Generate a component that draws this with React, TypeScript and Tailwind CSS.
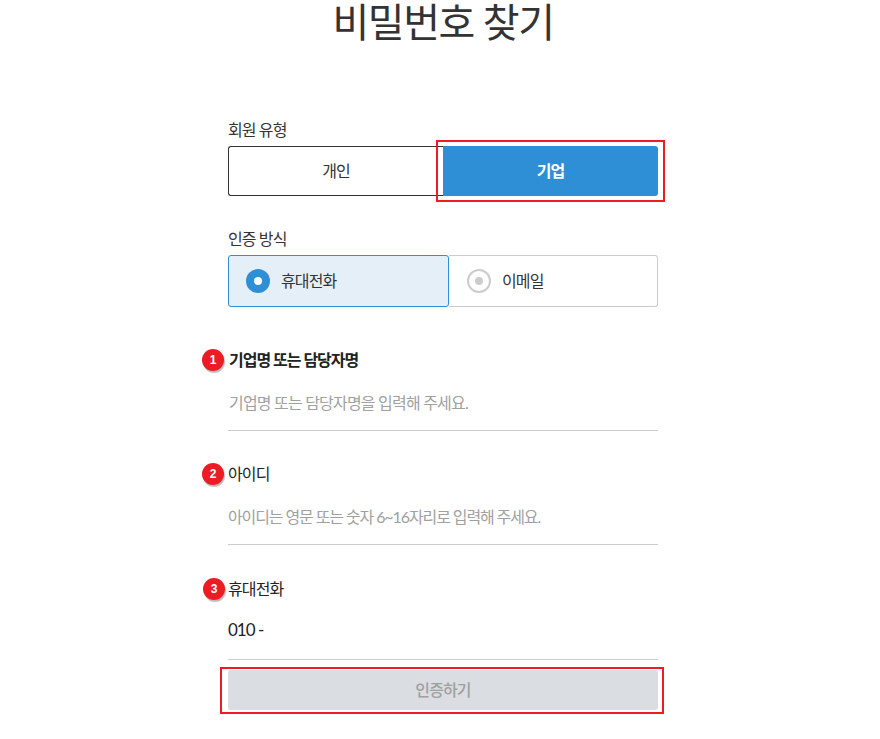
const fontStack = "font-['Lato','Noto_Sans_CJK_KR',sans-serif]";

function Marker({ n, className }: { n: number; className: string }) {
  return (
    <span
      className={`absolute flex h-[22px] w-[22px] items-center justify-center rounded-full bg-[#ed1c24] font-['Liberation_Sans',sans-serif] text-[12px] font-bold text-white shadow-[1px_2px_1px_#bbbbbb] ${className}`}
    >
      {n}
    </span>
  );
}

function Field({
  label,
  value,
  n,
  bold,
  className,
  labelClass,
  valueClass,
  markerClass,
}: {
  label: string;
  value: string;
  n: number;
  bold?: boolean;
  className: string;
  labelClass?: string;
  valueClass: string;
  markerClass: string;
}) {
  return (
    <div className={`relative ${className}`}>
      <Marker n={n} className={markerClass} />
      <div className={`h-[22px] text-[16px] leading-[22px] tracking-[-0.9px] text-[#222222] ${bold ? "font-bold" : ""} ${labelClass ?? ""}`}>
        {label}
      </div>
      <div className={`h-[60px] border-b border-[#cccccc] ${valueClass}`}>{value}</div>
    </div>
  );
}

export default function App() {
  return (
    <div className={`h-[739px] w-[880px] overflow-hidden bg-white ${fontStack}`}>
      <h1 className="pl-[6px] text-center text-[40px] leading-[44px] font-normal tracking-[-1.4px] text-[#333333]">비밀번호 찾기</h1>

      <div className="ml-[228px] mt-[75px] w-[430px]">
        <div className="h-[22px] text-[16px] leading-[22px] tracking-[-0.9px] text-[#333333]">회원 유형</div>

        <div className="relative mt-[5px] flex h-[50px]">
          <button className="h-full w-[215px] rounded-l-[3px] border border-r-0 border-[#333333] bg-white text-[16px] tracking-[-0.9px] text-[#333333]">
            개인
          </button>
          <button className="h-full w-[215px] rounded-r-[3px] bg-[#2f8fd6] text-[16px] font-bold tracking-[-0.9px] text-white">
            기업
          </button>
          <div className="absolute left-[208px] top-[-6px] h-[62px] w-[229px] border-2 border-[#ed1c24]" />
        </div>

        <div className="mt-[32px] h-[22px] text-[16px] leading-[22px] tracking-[-0.9px] text-[#333333]">인증 방식</div>

        <div className="mt-[5px] flex h-[52px]">
          <div className="flex h-full w-[221px] items-center rounded-[3px] border border-[#2f8fd6] bg-[#e5eff8] pl-[17px]">
            <span className="flex h-6 w-6 items-center justify-center rounded-full bg-[#2f8fd6]">
              <span className="h-2 w-2 rounded-full bg-white" />
            </span>
            <span className="ml-[11px] text-[16px] tracking-[-0.9px] text-[#333333]">휴대전화</span>
          </div>
          <div className="flex h-full w-[209px] items-center rounded-r-[3px] border border-l-0 border-[#cccccc] bg-white pl-[18px]">
            <span className="flex h-6 w-6 items-center justify-center rounded-full border-2 border-[#cccccc]">
              <span className="h-2 w-2 rounded-full bg-[#cccccc]" />
            </span>
            <span className="ml-[11px] text-[16px] tracking-[-0.9px] text-[#333333]">이메일</span>
          </div>
        </div>

        <Field
          className="mt-[42px]"
          n={1}
          bold
          label="기업명 또는 담당자명"
          value="기업명 또는 담당자명을 입력해 주세요."
          labelClass="pl-[1px] tracking-[-1px]"
          valueClass="pl-[1px] pt-[21px] text-[16px] leading-[22px] tracking-[-0.8px] text-[#a0a0a0]"
          markerClass="left-[-26px] top-0"
        />
        <Field
          className="mt-[32px]"
          n={2}
          label="아이디"
          value="아이디는 영문 또는 숫자 6~16자리로 입력해 주세요."
          valueClass="pt-[21px] text-[16px] leading-[22px] tracking-[-1.1px] text-[#a0a0a0]"
          markerClass="left-[-26px] top-0"
        />
        <Field
          className="mt-[33px]"
          n={3}
          label="휴대전화"
          value="010 -"
          valueClass="pt-[19px] text-[17px] leading-[22px] tracking-[-1px] text-[#222222]"
          markerClass="left-[-25px] top-0"
        />

        <div className="relative mt-[10px]">
          <button className="h-10 w-full rounded-[3px] bg-[#dadde1] text-[16px] font-medium tracking-[-0.9px] text-[#a0a0a0]">
            인증하기
          </button>
          <div className="absolute left-[-8px] top-[-3px] h-[47px] w-[444px] border-2 border-[#ed1c24]" />
        </div>
      </div>
    </div>
  );
}
